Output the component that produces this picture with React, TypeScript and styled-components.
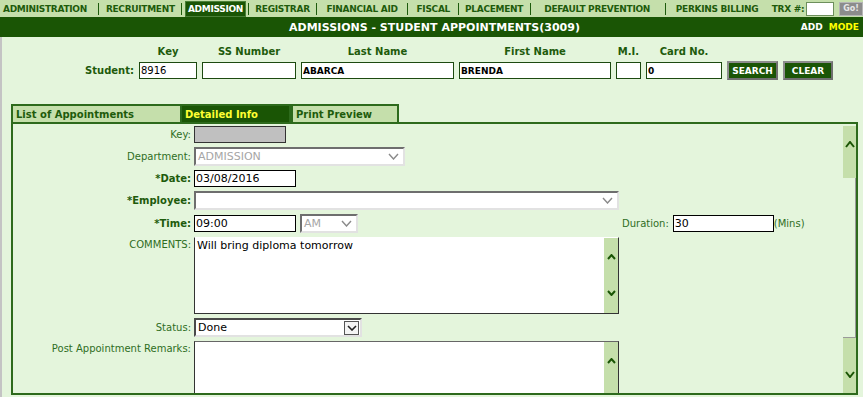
import React from 'react'
import styled, { createGlobalStyle } from 'styled-components'

const GlobalStyle = createGlobalStyle`
  html, body {
    margin: 0;
    padding: 0;
  }
  body {
    background: #e4f5dc;
    font-family: 'DejaVu Sans', Verdana, sans-serif;
    overflow: hidden;
  }
  input, textarea, button {
    font-family: inherit;
  }
`

const DARK = '#1a5505'
const GREEN_TEXT = '#1e5b0c'
const LABEL_GREEN = '#2f6e1f'
const PALE = '#c5dfab'

const Chevron = ({
  dir,
  color,
  w = 9,
  h = 6,
  sw = 2,
}: {
  dir: 'up' | 'down'
  color: string
  w?: number
  h?: number
  sw?: number
}) => (
  <svg width={w} height={h} viewBox={`0 0 ${w} ${h}`}>
    <polyline
      points={
        dir === 'up'
          ? `1,${h - 1} ${w / 2},1 ${w - 1},${h - 1}`
          : `1,1 ${w / 2},${h - 1} ${w - 1},1`
      }
      fill="none"
      stroke={color}
      strokeWidth={sw}
    />
  </svg>
)

const menu = [
  { label: 'ADMINISTRATION', w: 99, pl: 3 },
  { label: 'RECRUITMENT', w: 83, pl: 7 },
  { label: 'ADMISSION', w: 67, pl: 0, active: true },
  { label: 'REGISTRAR', w: 68, pl: 6 },
  { label: 'FINANCIAL AID', w: 90, pl: 9 },
  { label: 'FISCAL', w: 51, pl: 9 },
  { label: 'PLACEMENT', w: 72, pl: 6 },
  { label: 'DEFAULT PREVENTION', w: 135, pl: 13 },
  { label: 'PERKINS BILLING', w: 98, pl: 10 },
]

const App: React.FC = () => {
  return (
    <Page>
      <GlobalStyle />
      <MenuBar>
        {menu.map((m, i) => (
          <React.Fragment key={m.label}>
            {i > 0 && <Sep />}
            <MenuCell $w={m.w} $pl={m.pl}>
              {m.active ? <ActiveItem>{m.label}</ActiveItem> : m.label}
            </MenuCell>
          </React.Fragment>
        ))}
        <TrxLabel>TRX #:</TrxLabel>
        <TrxInput readOnly value="" />
        <GoButton>Go!</GoButton>
      </MenuBar>

      <TitleBar>
        <span />
        <Title>ADMISSIONS - STUDENT APPOINTMENTS(3009)</Title>
        <Mode>
          ADD <Yellow>MODE</Yellow>
        </Mode>
      </TitleBar>

      <Body>
        <SearchGrid>
          <span />
          <ColHead>Key</ColHead>
          <ColHead>SS Number</ColHead>
          <ColHead>Last Name</ColHead>
          <ColHead>First Name</ColHead>
          <ColHead>M.I.</ColHead>
          <ColHead>Card No.</ColHead>
          <span />
          <span />

          <RowLabel>Student:</RowLabel>
          <SearchInput readOnly value="8916" />
          <SearchInput readOnly value="" />
          <SearchInput readOnly value="ABARCA" $bold />
          <SearchInput readOnly value="BRENDA" $bold />
          <SearchInput readOnly value="" />
          <SearchInput readOnly value="0" $bold />
          <DarkButton>SEARCH</DarkButton>
          <DarkButton>CLEAR</DarkButton>
        </SearchGrid>

        <Tabs>
          <Tab $w={171}>List of Appointments</Tab>
          <Tab $w={109} $active>
            Detailed Info
          </Tab>
          <Tab $w={108}>Print Preview</Tab>
        </Tabs>

        <Panel>
          <Form>
            <Label>Key:</Label>
            <KeyBox />
            <span />

            <Label>Department:</Label>
            <SelectBox $w={211} $disabled>
              <span>ADMISSION</span>
              <Chevron dir="down" color="#8a8a8a" w={11} h={7} sw={1.4} />
            </SelectBox>
            <span />

            <Label $bold>*Date:</Label>
            <TextBox $w={102} readOnly value="03/08/2016" />
            <span />

            <Label $bold>*Employee:</Label>
            <SelectBox $w={425}>
              <span />
              <Chevron dir="down" color="#8a8a8a" w={11} h={7} sw={1.4} />
            </SelectBox>
            <span />

            <Label $bold>*Time:</Label>
            <InlineRow>
              <TextBox $w={102} readOnly value="09:00" />
              <SelectBox $w={58} $disabled>
                <span>AM</span>
                <Chevron dir="down" color="#8a8a8a" w={11} h={7} sw={1.4} />
              </SelectBox>
            </InlineRow>
            <InlineRow>
              <Label as="span">Duration:</Label>
              <TextBox $w={101} readOnly value="30" />
              <Unit>(Mins)</Unit>
            </InlineRow>

            <Label $top>COMMENTS:</Label>
            <AreaBox $h={77}>
              <Area readOnly value="Will bring diploma tomorrow" />
              <AreaScroll>
                <Chevron dir="up" color={DARK} />
                <Chevron dir="down" color={DARK} />
              </AreaScroll>
            </AreaBox>
            <span />

            <Label>Status:</Label>
            <SelectBox $w={168} $dark>
              <span>Done</span>
              <ArrowSquare>
                <Chevron dir="down" color="#222" w={10} h={6} sw={1.6} />
              </ArrowSquare>
            </SelectBox>
            <span />

            <Label $top>Post Appointment Remarks:</Label>
            <AreaBox $h={78} $topBorder>
              <Area readOnly value="" />
              <AreaScroll>
                <Chevron dir="up" color={DARK} />
                <span />
              </AreaScroll>
            </AreaBox>
            <span />
          </Form>

          <ScrollCol>
            <ScrollButton $h={52} $align="start">
              <Chevron dir="up" color={DARK} w={10} h={7} />
            </ScrollButton>
            <ScrollTrack />
            <ScrollButton $h={55} $align="end">
              <Chevron dir="down" color={DARK} w={10} h={7} />
            </ScrollButton>
          </ScrollCol>
        </Panel>
      </Body>
    </Page>
  )
}

const Page = styled.div`
  width: 863px;
  height: 397px;
  display: flex;
  flex-direction: column;
  overflow: hidden;
`

const MenuBar = styled.div`
  height: 17px;
  flex-shrink: 0;
  display: flex;
  align-items: center;
  background: ${PALE};
  color: ${GREEN_TEXT};
  font-size: 9px;
  font-weight: bold;
  letter-spacing: -0.3px;
  white-space: nowrap;
`

const MenuCell = styled.div<{ $w: number; $pl: number }>`
  width: ${(p) => p.$w}px;
  padding-left: ${(p) => p.$pl}px;
  box-sizing: border-box;
  height: 17px;
  display: flex;
  align-items: center;
  overflow: hidden;
`

const ActiveItem = styled.span`
  display: flex;
  align-items: center;
  justify-content: center;
  margin-left: 3px;
  width: 61px;
  height: 16px;
  background: ${DARK};
  color: #fff;
  border: 1px solid #4a7f38;
  box-sizing: border-box;
`

const Sep = styled.span`
  width: 1px;
  height: 12px;
  background: ${GREEN_TEXT};
  flex-shrink: 0;
`

const TrxLabel = styled.span`
  margin-left: 9px;
`

const TrxInput = styled.input`
  width: 28px;
  height: 14px;
  box-sizing: border-box;
  margin: 0 0 0 2px;
  padding: 0;
  border: 1px solid #6d8f5c;
  background: #fff;
`

const GoButton = styled.button`
  margin-left: 5px;
  width: 24px;
  height: 14px;
  padding: 0;
  background: #8c8c8c;
  border: 1px solid #b5b5b5;
  color: #e6e6e6;
  font-size: 8px;
  font-weight: bold;
`

const TitleBar = styled.div`
  height: 20px;
  flex-shrink: 0;
  background: ${DARK};
  display: grid;
  grid-template-columns: 1fr auto 1fr;
  align-items: center;
  color: #fff;
`

const Title = styled.div`
  font-size: 11px;
  font-weight: bold;
  padding-left: 6px;
`

const Mode = styled.div`
  justify-self: end;
  padding-right: 4px;
  font-size: 9px;
  font-weight: bold;
  word-spacing: 3px;
`

const Yellow = styled.span`
  color: #ffff00;
`

const Body = styled.div`
  flex: 1;
  display: flex;
  flex-direction: column;
  border-left: 2px solid #c4c4c4;
  min-height: 0;
  padding-bottom: 2px;
`

const SearchGrid = styled.div`
  display: grid;
  grid-template-columns: 132px 58px 94px 153px 152px 25px 76px 51px 50px;
  column-gap: 5px;
  row-gap: 3px;
  padding-top: 8px;
  align-items: center;
`

const ColHead = styled.div`
  text-align: center;
  font-size: 10px;
  font-weight: bold;
  color: ${GREEN_TEXT};
  line-height: 13px;
`

const RowLabel = styled.div`
  text-align: right;
  font-size: 10px;
  font-weight: bold;
  color: ${GREEN_TEXT};
`

const SearchInput = styled.input<{ $bold?: boolean }>`
  height: 17px;
  box-sizing: border-box;
  width: 100%;
  margin: 0;
  padding: 0 1px;
  border: 1px solid #1d4a10;
  background: #fff;
  color: #000;
  font-size: ${(p) => (p.$bold ? '9px' : '10px')};
  font-weight: ${(p) => (p.$bold ? 'bold' : 'normal')};
`

const DarkButton = styled.button`
  height: 19px;
  width: 100%;
  padding: 0;
  background: ${DARK};
  color: #fff;
  font-size: 9px;
  font-weight: bold;
  border: 2px solid #8d8d8d;
  border-right-color: #6f6f6f;
  border-bottom-color: #6f6f6f;
`

const Tabs = styled.div`
  display: flex;
  margin: 24px 0 0 9px;
`

const Tab = styled.div<{ $w: number; $active?: boolean }>`
  width: ${(p) => p.$w}px;
  height: 18px;
  box-sizing: border-box;
  padding: 3px 0 0 3px;
  border: 2px solid #2d6a1c;
  border-bottom: none;
  border-left-width: ${(p) => (p.$active ? 0 : 2)}px;
  background: ${(p) => (p.$active ? DARK : PALE)};
  color: ${(p) => (p.$active ? '#ffff33' : GREEN_TEXT)};
  font-size: 10px;
  font-weight: bold;
  white-space: nowrap;
`

const Panel = styled.div`
  flex: 1;
  min-height: 0;
  margin: 0 5px 0 9px;
  border: 2px solid #2d6a1c;
  background: #e4f5dc;
  display: flex;
  overflow: hidden;
`

const Form = styled.div`
  flex: 1;
  display: grid;
  grid-template-columns: 178px 425px auto;
  grid-auto-rows: min-content;
  column-gap: 3px;
  row-gap: 4px;
  padding-top: 2px;
  align-items: center;
  overflow: hidden;
`

const Label = styled.div<{ $bold?: boolean; $top?: boolean }>`
  text-align: right;
  font-size: 10px;
  font-weight: ${(p) => (p.$bold ? 'bold' : 'normal')};
  color: ${(p) => (p.$bold ? GREEN_TEXT : LABEL_GREEN)};
  align-self: ${(p) => (p.$top ? 'start' : 'center')};
  padding-top: ${(p) => (p.$top ? '2px' : '0')};
  white-space: nowrap;
`

const KeyBox = styled.div`
  width: 92px;
  height: 17px;
  box-sizing: border-box;
  background: #c0c0c0;
  border: 1px solid #333;
`

const TextBox = styled.input<{ $w: number }>`
  width: ${(p) => p.$w}px;
  height: 17px;
  box-sizing: border-box;
  margin: 0;
  padding: 0 1px;
  border: 1px solid #000;
  background: #fff;
  color: #000;
  font-size: 11px;
`

const SelectBox = styled.div<{ $w: number; $disabled?: boolean; $dark?: boolean }>`
  width: ${(p) => p.$w}px;
  height: 19px;
  box-sizing: border-box;
  display: flex;
  align-items: center;
  justify-content: space-between;
  padding: 0 4px 0 2px;
  padding-right: ${(p) => (p.$dark ? '1px' : '4px')};
  background: #fff;
  border: 2px solid #e2e2e2;
  border-top-color: ${(p) => (p.$dark ? '#4a4a4a' : '#6e6e6e')};
  border-left-color: ${(p) => (p.$dark ? '#4a4a4a' : '#6e6e6e')};
  color: ${(p) => (p.$disabled ? '#a6a6a6' : '#000')};
  font-size: 11px;
`

const ArrowSquare = styled.div`
  width: 15px;
  height: 14px;
  box-sizing: border-box;
  border: 1px solid #555;
  background: #f4f4f4;
  display: flex;
  align-items: center;
  justify-content: center;
`

const InlineRow = styled.div`
  display: flex;
  align-items: center;
  gap: 4px;
`

const Unit = styled.span`
  margin-left: -4px;
  font-size: 10px;
  color: ${LABEL_GREEN};
`

const AreaBox = styled.div<{ $h: number; $topBorder?: boolean }>`
  width: 425px;
  height: ${(p) => p.$h}px;
  box-sizing: border-box;
  display: flex;
  background: #fff;
  border: 1px solid #333;
  border-top-color: ${(p) => (p.$topBorder ? '#666' : '#fff')};
`

const Area = styled.textarea`
  flex: 1;
  border: none;
  margin: 0;
  padding: 1px 2px;
  resize: none;
  overflow: hidden;
  outline: none;
  font-size: 11px;
  color: #000;
  background: #fff;
`

const AreaScroll = styled.div`
  width: 14px;
  background: ${PALE};
  display: flex;
  flex-direction: column;
  align-items: center;
  justify-content: space-between;
  padding: 16px 0 17px;
  box-sizing: border-box;
`

const ScrollCol = styled.div`
  width: 13px;
  display: flex;
  flex-direction: column;
  padding-top: 2px;
`

const ScrollButton = styled.div<{ $h: number; $align: 'start' | 'end' }>`
  height: ${(p) => p.$h}px;
  background: ${PALE};
  display: flex;
  justify-content: center;
  align-items: ${(p) => (p.$align === 'start' ? 'flex-start' : 'flex-end')};
  padding: ${(p) => (p.$align === 'start' ? '15px 0 0' : '0 0 15px')};
  box-sizing: border-box;
`

const ScrollTrack = styled.div`
  flex: 1;
  border-right: 1px solid #9a9a9a;
  border-bottom: 1px solid #9a9a9a;
`

export default App
